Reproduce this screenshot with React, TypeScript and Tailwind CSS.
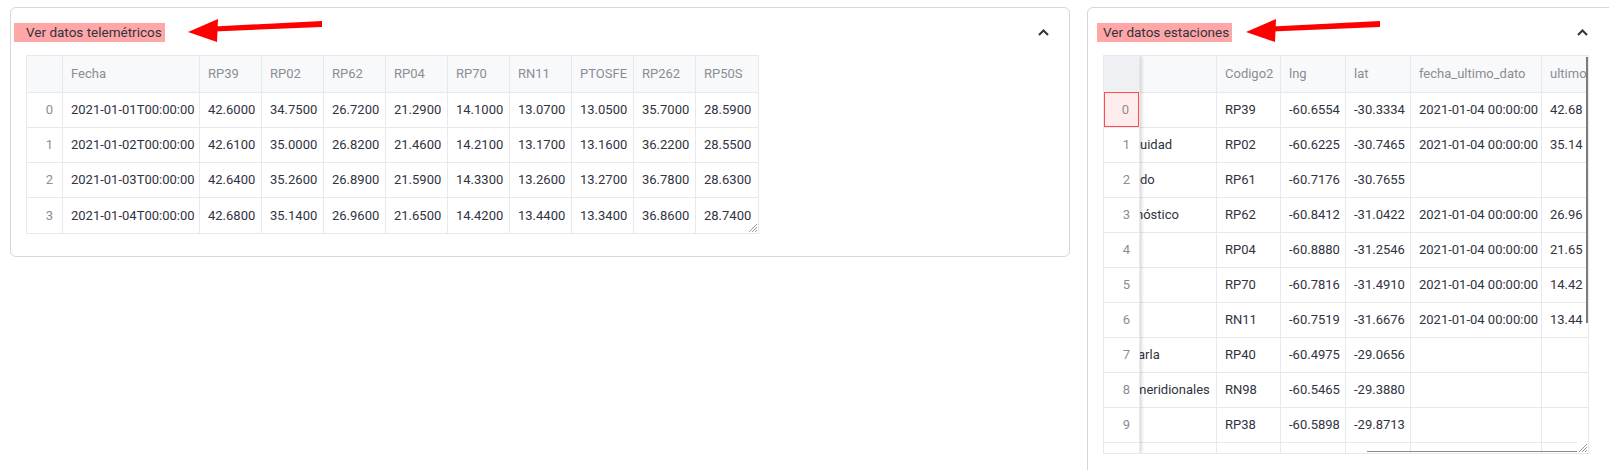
import React from 'react';

const TELE_COLS = ['Fecha', 'RP39', 'RP02', 'RP62', 'RP04', 'RP70', 'RN11', 'PTOSFE', 'RP262', 'RP50S'];
const TELE_WIDTHS = ['w-[137px]', 'w-[62px]', 'w-[62px]', 'w-[62px]', 'w-[62px]', 'w-[62px]', 'w-[62px]', 'w-[62px]', 'w-[62px]', 'w-[61px]'];

const TELE_ROWS = [
  ['2021-01-01T00:00:00', '42.6000', '34.7500', '26.7200', '21.2900', '14.1000', '13.0700', '13.0500', '35.7000', '28.5900'],
  ['2021-01-02T00:00:00', '42.6100', '35.0000', '26.8200', '21.4600', '14.2100', '13.1700', '13.1600', '36.2200', '28.5500'],
  ['2021-01-03T00:00:00', '42.6400', '35.2600', '26.8900', '21.5900', '14.3300', '13.2600', '13.2700', '36.7800', '28.6300'],
  ['2021-01-04T00:00:00', '42.6800', '35.1400', '26.9600', '21.6500', '14.4200', '13.4400', '13.3400', '36.8600', '28.7400'],
];

// name column is scrolled, so only the tail of each name shows
const EST_ROWS = [
  { name: '', shift: 'ml-0', cod: 'RP39', lng: '-60.6554', lat: '-30.3334', fecha: '2021-01-04 00:00:00', ult: '42.68' },
  { name: 'uidad', shift: 'ml-0', cod: 'RP02', lng: '-60.6225', lat: '-30.7465', fecha: '2021-01-04 00:00:00', ult: '35.14' },
  { name: 'do', shift: 'ml-0', cod: 'RP61', lng: '-60.7176', lat: '-30.7655', fecha: '', ult: '' },
  { name: 'nóstico', shift: '-ml-[4px]', cod: 'RP62', lng: '-60.8412', lat: '-31.0422', fecha: '2021-01-04 00:00:00', ult: '26.96' },
  { name: '', shift: 'ml-0', cod: 'RP04', lng: '-60.8880', lat: '-31.2546', fecha: '2021-01-04 00:00:00', ult: '21.65' },
  { name: '', shift: 'ml-0', cod: 'RP70', lng: '-60.7816', lat: '-31.4910', fecha: '2021-01-04 00:00:00', ult: '14.42' },
  { name: '', shift: 'ml-0', cod: 'RN11', lng: '-60.7519', lat: '-31.6676', fecha: '2021-01-04 00:00:00', ult: '13.44' },
  { name: 'arla', shift: '-ml-[2px]', cod: 'RP40', lng: '-60.4975', lat: '-29.0656', fecha: '', ult: '' },
  { name: 'meridionales', shift: '-ml-[5px]', cod: 'RN98', lng: '-60.5465', lat: '-29.3880', fecha: '', ult: '' },
  { name: '', shift: 'ml-0', cod: 'RP38', lng: '-60.5898', lat: '-29.8713', fecha: '', ult: '' },
  { name: 'lli', shift: 'ml-[18px]', cod: '', lng: '', lat: '', fecha: '', ult: '' },
];

function Arrow({ className }: { className: string }) {
  return (
    <svg className={className} width="135" height="26" viewBox="0 0 135 26">
      <polygon points="0,14 30,1 29,24" fill="#ff0000" />
      <polygon points="26,8.5 134,3 134,9 26,13.5" fill="#ff0000" />
    </svg>
  );
}

function Chevron() {
  return (
    <svg width="11" height="7" viewBox="0 0 11 7">
      <polyline points="1,6 5.5,1.5 10,6" fill="none" stroke="#31333f" strokeWidth="2" />
    </svg>
  );
}

function Resize() {
  return (
    <svg className="absolute right-[1px] bottom-[1px]" width="9" height="9" viewBox="0 0 9 9">
      <path d="M9 1 L1 9 M9 4 L4 9 M9 7 L7 9" stroke="#9a9a9a" strokeWidth="1" />
    </svg>
  );
}

function TeleTable() {
  return (
    <div className="relative ml-[15px] mt-[13px] w-[733px] border border-[#e8e9ec] text-[13px]">
      <div className="flex h-[36px] bg-[#f8f9fb] text-[#8b8d95]">
        <div className="w-[36px] border-r border-[#e8e9ec]" />
        {TELE_COLS.map((c, i) => (
          <div
            key={c}
            className={`${TELE_WIDTHS[i]} flex items-center px-[8px] ${i < TELE_COLS.length - 1 ? 'border-r border-[#e8e9ec]' : ''}`}
          >
            {c}
          </div>
        ))}
      </div>
      {TELE_ROWS.map((row, r) => (
        <div key={r} className={`flex border-t border-[#e8e9ec] ${r === 3 ? 'h-[36px]' : 'h-[35px]'}`}>
          <div className="w-[36px] flex items-center justify-end pr-[9px] border-r border-[#e8e9ec] text-[#8b8d95]">
            {r}
          </div>
          {row.map((v, i) => (
            <div
              key={i}
              className={`${TELE_WIDTHS[i]} flex items-center px-[8px] text-[#31333f] whitespace-nowrap ${i < row.length - 1 ? 'border-r border-[#e8e9ec]' : ''}`}
            >
              {v}
            </div>
          ))}
        </div>
      ))}
      <Resize />
    </div>
  );
}

function EstTable() {
  const cell = 'flex items-center px-[8px] border-r border-[#e8e9ec] whitespace-nowrap overflow-hidden';
  return (
    <div className="relative ml-[15px] mt-[13px] w-[486px] h-[399px] border border-[#e8e9ec] text-[13px] flex overflow-hidden">
      {/* frozen index column */}
      <div className="relative z-10 w-[36px] shrink-0 flex flex-col bg-white shadow-[2px_0_3px_rgba(0,0,0,0.14)] border-r border-[#e8e9ec]">
        <div className="h-[36px] shrink-0 bg-[#eff0f3]" />
        {EST_ROWS.map((_, r) => (
          <div
            key={r}
            className={`h-[35px] shrink-0 flex items-center justify-end pr-[9px] text-[#8b8d95] ${
              r === 0 ? 'border border-[#ff4b4b] bg-[#ffeded]' : 'border-t border-[#e8e9ec]'
            }`}
          >
            {r}
          </div>
        ))}
      </div>
      {/* scrolled area */}
      <div className="flex-1 overflow-hidden flex flex-col">
        <div className="flex h-[36px] shrink-0 bg-[#f8f9fb] text-[#8b8d95]">
          <div className={`w-[77px] shrink-0 ${cell}`} />
          <div className={`w-[64px] shrink-0 ${cell}`}>Codigo2</div>
          <div className={`w-[65px] shrink-0 ${cell}`}>lng</div>
          <div className={`w-[65px] shrink-0 ${cell}`}>lat</div>
          <div className={`w-[131px] shrink-0 ${cell}`}>fecha_ultimo_dato</div>
          <div className={`w-[100px] shrink-0 ${cell}`}>ultimo_dato</div>
        </div>
        {EST_ROWS.map((row, r) => (
          <div key={r} className="flex h-[35px] shrink-0 border-t border-[#e8e9ec] text-[#31333f]">
            <div className="w-[77px] shrink-0 flex items-center border-r border-[#e8e9ec] whitespace-nowrap overflow-hidden">
              <span className={row.shift}>{row.name}</span>
            </div>
            <div className={`w-[64px] shrink-0 ${cell}`}>{row.cod}</div>
            <div className={`w-[65px] shrink-0 ${cell}`}>{row.lng}</div>
            <div className={`w-[65px] shrink-0 ${cell}`}>{row.lat}</div>
            <div className={`w-[131px] shrink-0 ${cell}`}>{row.fecha}</div>
            <div className={`w-[100px] shrink-0 ${cell}`}>{row.ult}</div>
          </div>
        ))}
      </div>
      {/* scrollbars */}
      <div className="absolute right-[0px] top-[1px] z-20 w-[2px] h-[266px] bg-[#7d7d80]" />
      <div className="absolute left-[263px] bottom-[1px] z-20 w-[212px] h-[1px] bg-[#8a8a8d]" />
      <div className="absolute right-0 bottom-0 z-20 w-[11px] h-[11px] bg-white">
        <Resize />
      </div>
    </div>
  );
}

export default function App() {
  return (
    <div className="w-[1609px] h-[470px] overflow-hidden bg-white flex items-start gap-[17px] pt-[7px] pl-[10px] font-['Roboto',sans-serif] text-[#31333f]">
      {/* Telemetry expander */}
      <div className="w-[1060px] h-[250px] shrink-0 border border-[#d6d6d9] rounded-[6px] pt-[15px]">
        <div className="relative flex items-center justify-between pl-[3px] pr-[20px]">
          <span className="bg-[#ffa6a6] h-[19px] leading-[19px] pl-[12px] pr-[3px] text-[13.5px]">Ver datos telemétricos</span>
          <Arrow className="absolute left-[177px] top-[-5px]" />
          <Chevron />
        </div>
        <TeleTable />
      </div>

      {/* Stations expander */}
      <div className="w-[560px] h-[480px] shrink-0 border border-[#d6d6d9] rounded-[6px] pt-[15px]">
        <div className="relative flex items-center justify-between pl-[9px] w-[500px]">
          <span className="bg-[#ffa6a6] h-[19px] leading-[19px] pl-[6px] pr-[3px] text-[13.5px]">Ver datos estaciones</span>
          <Arrow className="absolute left-[158px] top-[-5px]" />
          <Chevron />
        </div>
        <EstTable />
      </div>
    </div>
  );
}
